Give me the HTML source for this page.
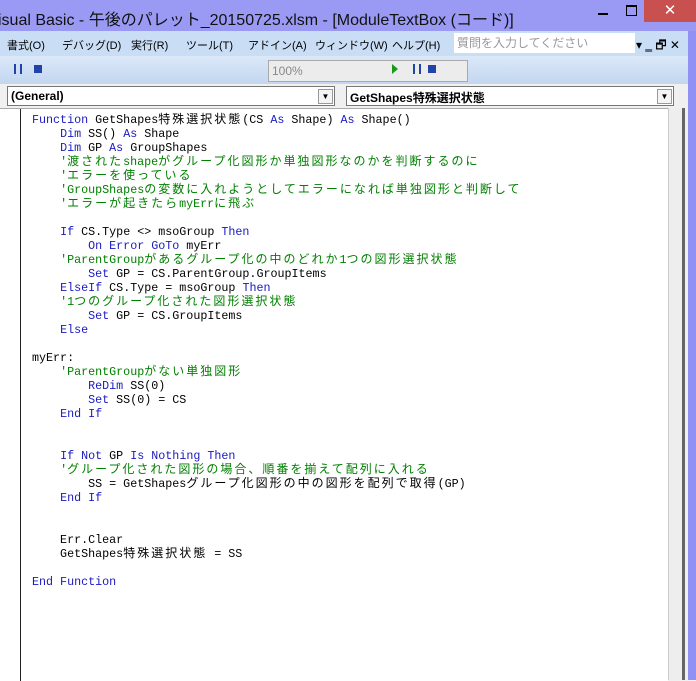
<!DOCTYPE html><html><head><meta charset="utf-8"><style>
body{margin:0;width:696px;height:680px;overflow:hidden;position:relative;background:#f0f0f0;font-family:"Liberation Sans","Noto Sans CJK JP",sans-serif}
.t{position:absolute;left:0;top:0;width:696px;height:31px;background:#9a9af5;font-size:16px;color:#111;}
.t span{position:absolute;left:-2px;top:6px;white-space:nowrap}
.menu{position:absolute;left:0;top:31px;width:696px;height:25px;background:#c9ddf5;font-size:11px}
.menu span{position:absolute;top:6px;white-space:nowrap}
.tb{position:absolute;left:0;top:56px;width:696px;height:28px;background:linear-gradient(#dbe8f8,#c3d7f0)}
.dd{position:absolute;top:86px;height:18px;background:#fff;border:1px solid #777;font-size:12px;font-weight:bold;font-family:"Liberation Sans","Noto Sans CJK JP",sans-serif}
.dd b{position:absolute;right:1px;top:2px;width:13px;height:13px;border:1px solid #999;background:#f4f4f4;font-size:8px;text-align:center;line-height:13px;font-weight:normal}
.code{position:absolute;left:0;top:108px;width:668px;height:572px;background:#fff;border-top:1px solid #aaa}
.g{position:absolute;left:20px;top:0;width:1px;height:572px;background:#222}
pre{position:absolute;left:32px;top:4px;margin:0;font-family:"Liberation Mono","Noto Sans CJK JP",monospace;font-size:11.7px;line-height:14px;color:#000}
.k{color:#1a1ac0}.c{color:#008000}
i{font-style:normal;font-family:"Noto Sans CJK JP",sans-serif;font-size:12px;letter-spacing:2px;line-height:0}
</style></head><body>
<div class="t"><span>isual Basic - 午後のパレット_20150725.xlsm - [ModuleTextBox (コード)]</span>
<div style="position:absolute;left:598px;top:13px;width:10px;height:2px;background:#000"></div>
<div style="position:absolute;left:626px;top:5px;width:9px;height:8px;border:1px solid #000;border-top-width:2px"></div>
<div style="position:absolute;left:644px;top:0;width:52px;height:22px;background:#c8504e;color:#fff;text-align:center;font-size:15px;line-height:21px">✕</div></div>
<div class="menu">
<span style="left:7px">書式(O)</span><span style="left:62px">デバッグ(D)</span><span style="left:131px">実行(R)</span><span style="left:186px">ツール(T)</span><span style="left:248px">アドイン(A)</span><span style="left:315px">ウィンドウ(W)</span><span style="left:392px">ヘルプ(H)</span>
<div style="position:absolute;left:454px;top:2px;width:178px;height:20px;background:#fff;color:#999;font-size:12px;line-height:20px;padding-left:3px">質問を入力してください</div>
<span style="left:636px;top:5px;font-size:12px">▾ ‗ 🗗 ✕</span></div>
<div class="tb">
<div style="position:absolute;left:268px;top:4px;width:195px;height:20px;background:#ececec;border:1px solid #aaa;font-size:12px;color:#888;line-height:20px;padding-left:3px">100%</div>
<div style="position:absolute;left:14px;top:8px;width:4px;height:10px;border-left:2px solid #2244aa;border-right:2px solid #2244aa"></div>
<div style="position:absolute;left:34px;top:9px;width:8px;height:8px;background:#2244aa"></div>
<div style="position:absolute;left:392px;top:8px;width:0;height:0;border-left:6px solid #1a9a1a;border-top:5px solid transparent;border-bottom:5px solid transparent"></div>
<div style="position:absolute;left:413px;top:8px;width:4px;height:10px;border-left:2px solid #2244aa;border-right:2px solid #2244aa"></div>
<div style="position:absolute;left:428px;top:9px;width:8px;height:8px;background:#2244aa"></div>
</div>
<div style="position:absolute;left:0;top:84px;width:696px;height:24px;background:#f0f0f0"></div>
<div class="dd" style="left:7px;width:326px"><span style="position:absolute;left:3px;top:2px">(General)</span><b>▼</b></div>
<div class="dd" style="left:346px;width:326px"><span style="position:absolute;left:3px;top:2px">GetShapes特殊選択状態</span><b>▼</b></div>
<div class="code"><div class="g"></div>
<pre><span class="k">Function</span> GetShapes<i>特殊選択状態</i>(CS <span class="k">As</span> Shape) <span class="k">As</span> Shape()
    <span class="k">Dim</span> SS() <span class="k">As</span> Shape
    <span class="k">Dim</span> GP <span class="k">As</span> GroupShapes
    <span class="c">'<i>渡された</i>shape<i>がグループ化図形か単独図形なのかを判断するのに</i></span>
    <span class="c">'<i>エラーを使っている</i></span>
    <span class="c">'GroupShapes<i>の変数に入れようとしてエラーになれば単独図形と判断して</i></span>
    <span class="c">'<i>エラーが起きたら</i>myErr<i>に飛ぶ</i></span>

    <span class="k">If</span> CS.Type &lt;&gt; msoGroup <span class="k">Then</span>
        <span class="k">On Error GoTo</span> myErr
    <span class="c">'ParentGroup<i>があるグループ化の中のどれか</i>1<i>つの図形選択状態</i></span>
        <span class="k">Set</span> GP = CS.ParentGroup.GroupItems
    <span class="k">ElseIf</span> CS.Type = msoGroup <span class="k">Then</span>
    <span class="c">'1<i>つのグループ化された図形選択状態</i></span>
        <span class="k">Set</span> GP = CS.GroupItems
    <span class="k">Else</span>

myErr:
    <span class="c">'ParentGroup<i>がない単独図形</i></span>
        <span class="k">ReDim</span> SS(0)
        <span class="k">Set</span> SS(0) = CS
    <span class="k">End If</span>


    <span class="k">If Not</span> GP <span class="k">Is Nothing Then</span>
    <span class="c">'<i>グループ化された図形の場合、順番を揃えて配列に入れる</i></span>
        SS = GetShapes<i>グループ化図形の中の図形を配列で取得</i>(GP)
    <span class="k">End If</span>


    Err.Clear
    GetShapes<i>特殊選択状態</i> = SS

<span class="k">End Function</span></pre></div>
<div style="position:absolute;left:668px;top:108px;width:14px;height:572px;background:#eee;border-left:1px solid #ccc"></div>
<div style="position:absolute;left:682px;top:108px;width:3px;height:572px;background:#666"></div>
<div style="position:absolute;left:688px;top:31px;width:8px;height:649px;background:#9090f5"></div>
</body></html>
